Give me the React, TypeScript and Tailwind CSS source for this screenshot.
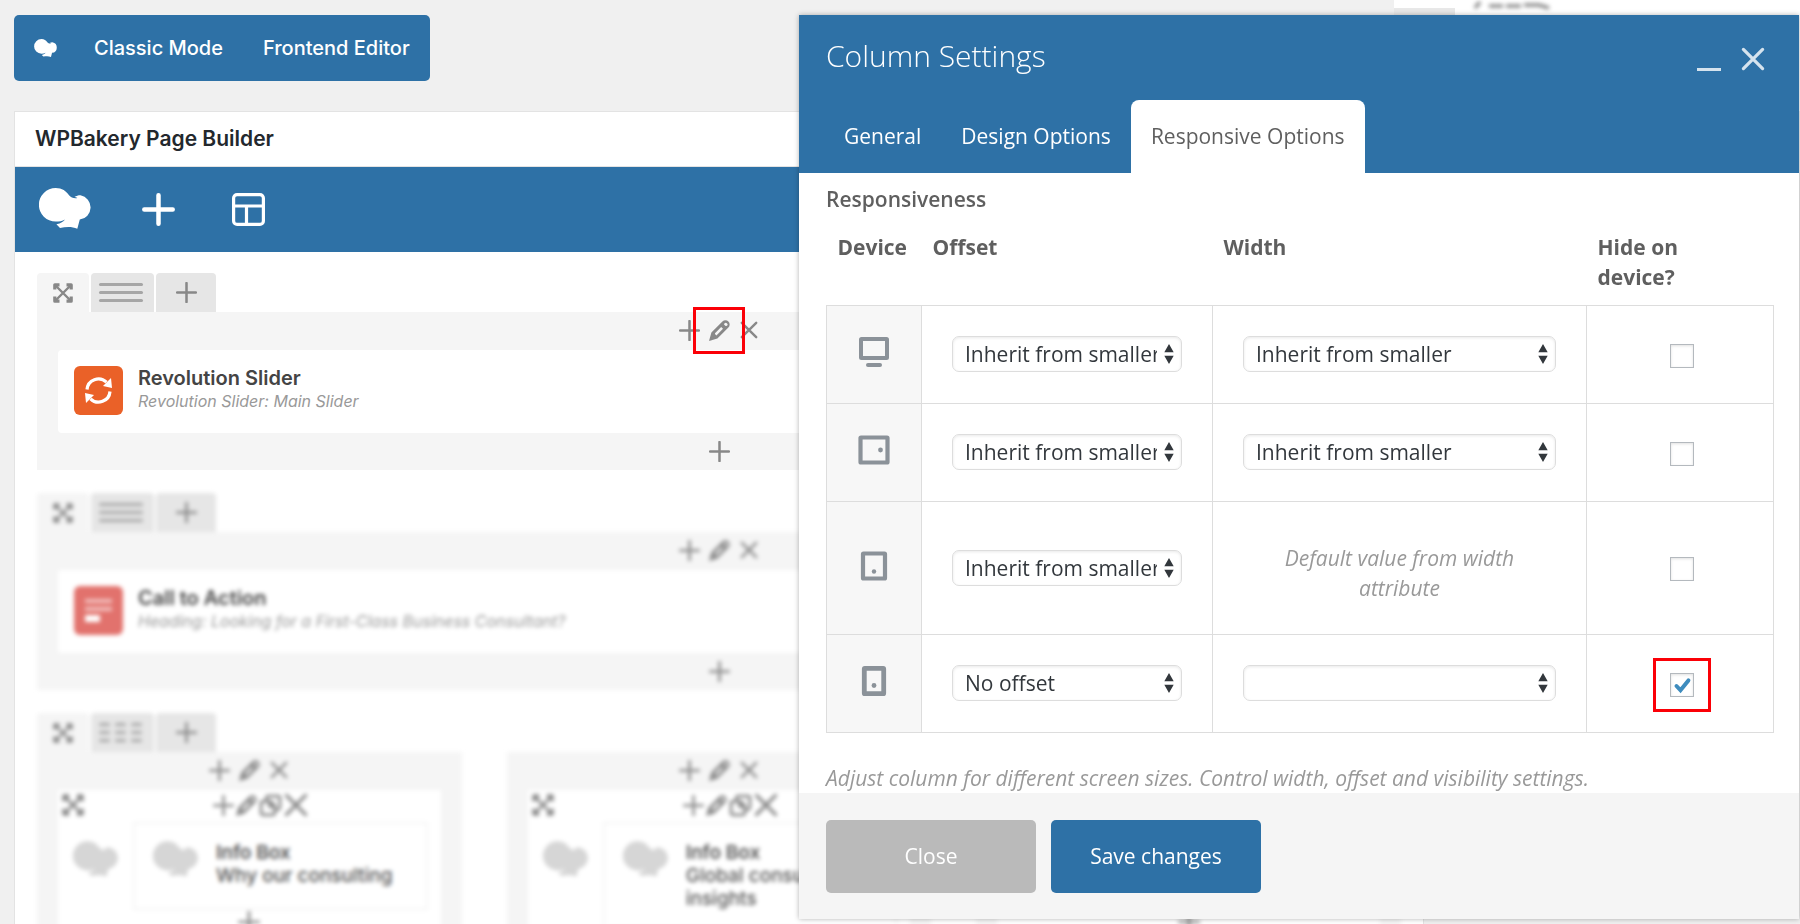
import { useState } from "react";
import clsx from "clsx";

const Logo = ({ className }: { className?: string }) => (
    <svg viewBox="0 0 54 41" fill="currentColor" className={className}>
        <path d="M16.7 0C23 0 27.4 3.2 30 7.2C32 9.6 35 10.6 38.4 10C37.4 9.2 36.4 9 35.4 9C37.4 7.8 39.2 7.3 41.5 7.3A12.3 12.3 0 0 1 40.8 31.6L38.3 40.8C33 38.4 27 38.8 21 40L17.4 36.2C22 35.2 24.5 33.6 26 31.4C23.4 33 20.2 33.6 16.7 33.6A16.8 16.8 0 0 1 16.7 0Z" />
    </svg>
);

const Plus = ({ className }: { className?: string }) => (
    <svg viewBox="0 0 20 20" fill="none" stroke="currentColor" strokeWidth="2.4" strokeLinecap="round" className={className}>
        <path d="M10 1V19M1 10H19" />
    </svg>
);

const Cross = ({ className }: { className?: string }) => (
    <svg viewBox="0 0 20 20" fill="none" stroke="currentColor" strokeWidth="2.7" strokeLinecap="round" className={className}>
        <path d="M2 2L18 18M18 2L2 18" />
    </svg>
);

const Pencil = ({ className }: { className?: string }) => (
    <svg viewBox="0 0 21 21" fill="currentColor" fillRule="evenodd" className={className}>
        <path d="M0 21L2.4 12.6L13.4 1.6A4.2 4.2 0 0 1 19.4 7.6L8.4 18.6ZM6 14L7.4 15.4L14 8.8L12.2 7L6 13.2ZM15 4.4L16.6 6A1.5 1.5 0 0 0 18 3.4A1.7 1.7 0 0 0 15 4.4Z" />
    </svg>
);

const Copy = ({ className }: { className?: string }) => (
    <svg viewBox="0 0 22 22" fill="none" stroke="currentColor" strokeWidth="2.6" strokeLinejoin="round" className={className}>
        <path d="M7 6V4A2 2 0 0 1 9 2H18A2 2 0 0 1 20 4V12A3 3 0 0 1 16 15M4 7H11L15 11V18A2 2 0 0 1 13 20H4A2 2 0 0 1 2 18V9A2 2 0 0 1 4 7ZM10 7V12H15" />
    </svg>
);

const Expand = ({ className }: { className?: string }) => (
    <svg viewBox="0 0 20 20" fill="none" stroke="currentColor" strokeWidth="3.2" strokeLinejoin="round" className={className}>
        <path strokeWidth="2.4" d="M3 3L17 17M17 3L3 17" />
        <path d="M1.8 6.5V1.8H6.5M13.5 1.8H18.2V6.5M18.2 13.5V18.2H13.5M6.5 18.2H1.8V13.5" />
    </svg>
);

const Layout = ({ className }: { className?: string }) => (
    <svg viewBox="0 0 33 33" fill="none" stroke="currentColor" strokeWidth="3.2" className={className}>
        <rect x="1.6" y="1.6" width="29.8" height="29.8" rx="3.5" />
        <path d="M2 13H31M14.5 13V31" />
    </svg>
);

const Refresh = ({ className }: { className?: string }) => (
    <svg viewBox="0 0 27 27" fill="currentColor" className={className}>
        <path d="M2 12.5A11.5 11.5 0 0 1 21.5 5.2M25 14.5A11.5 11.5 0 0 1 5.5 21.8" fill="none" stroke="currentColor" strokeWidth="3.2" />
        <path d="M18 9L26 1L27 11ZM9 18L1 26L0 16Z" />
    </svg>
);

const TextBlock = ({ className }: { className?: string }) => (
    <svg viewBox="0 0 27 25" fill="currentColor" className={className}>
        <path opacity="0.55" d="M0 1H27V5H0ZM0 9H27V13H0Z" />
        <rect y="17" width="15" height="7" rx="1" />
    </svg>
);

const deviceIcons = {
    desktop: (
        <svg viewBox="0 0 32 32" className="mx-auto size-8" fill="none" stroke="#8b9299" strokeWidth="4" strokeLinejoin="round">
            <rect x="3" y="3" width="26" height="19" rx="0.5" />
            <path d="M10 29H22" strokeLinecap="round" />
        </svg>
    ),
    tabletLandscape: (
        <svg viewBox="0 0 32 32" className="mx-auto size-8" fill="none" stroke="#8b9299" strokeWidth="4.2" strokeLinejoin="round">
            <rect x="2.5" y="3.5" width="27" height="25" rx="0.5" />
            <circle cx="22.5" cy="16" r="2.4" fill="#8b9299" stroke="none" />
        </svg>
    ),
    tablet: (
        <svg viewBox="0 0 32 32" className="mx-auto size-8" fill="none" stroke="#8b9299" strokeWidth="4.2" strokeLinejoin="round">
            <rect x="5" y="3.5" width="22" height="25" rx="0.5" />
            <circle cx="16" cy="21.5" r="2.2" fill="#8b9299" stroke="none" />
        </svg>
    ),
    phone: (
        <svg viewBox="0 0 32 32" className="mx-auto size-8" fill="none" stroke="#8b9299" strokeWidth="4.8" strokeLinejoin="round">
            <rect x="6.3" y="3.3" width="19.4" height="25.4" rx="0.5" />
            <circle cx="16" cy="20.5" r="2.4" fill="#8b9299" stroke="none" />
        </svg>
    ),
};

function ColumnControls({ highlight = false }: { highlight?: boolean }) {
    return (
        <div className="flex h-[38px] items-center justify-center pb-[2px] text-[#888]">
            <button aria-label="Add element" className="flex w-[30px] justify-center"><Plus className="size-[21px]" /></button>
            <button aria-label="Edit column" className="relative flex w-[30px] justify-center">
                <Pencil className="size-[21px]" />
                {highlight && <span className="absolute -inset-x-[11px] -inset-y-[13px] z-10 border-[3px] border-[#fb0007]" />}
            </button>
            <button aria-label="Delete column" className="flex w-[30px] justify-center"><Cross className="size-[18px]" /></button>
        </div>
    );
}

function RowTabs({ columns }: { columns: number }) {
    return (
        <div className="flex h-[39px] gap-[2px] text-[#888]">
            <button aria-label="Drag row" className="flex w-[52px] items-center justify-center rounded-t-sm bg-[#f5f5f5]">
                <Expand className="size-5" />
            </button>
            <button aria-label="Change layout" className="flex w-[63px] items-center gap-[5px] rounded-t-sm bg-[#e6e6e6] pl-2">
                {Array.from({ length: columns }, (_, i) => (
                    <span key={i} className={clsx("flex flex-col gap-[5px]", columns === 1 ? "w-11" : "w-[11px]")}>
                        <span className="h-[3px] rounded-full bg-[#a6a6a6]" />
                        <span className="h-[3px] rounded-full bg-[#a6a6a6]" />
                        <span className="h-[3px] rounded-full bg-[#a6a6a6]" />
                    </span>
                ))}
            </button>
            <button aria-label="Add column" className="flex w-[60px] items-center justify-center rounded-t-sm bg-[#e6e6e6]">
                <Plus className="size-[21px]" />
            </button>
        </div>
    );
}

type ElementRowProps = {
    title: string;
    text: string;
    icon: React.ReactNode;
    iconBg: string;
    highlight?: boolean;
    blurred?: boolean;
};

function ElementRow({ title, text, icon, iconBg, highlight, blurred }: ElementRowProps) {
    return (
        <section className={blurred ? "blur-[2px]" : ""}>
            <RowTabs columns={1} />
            <div className="bg-[#f5f5f5] px-[21px]">
                <ColumnControls highlight={highlight} />
                <div className="flex h-[83px] items-center gap-[15px] rounded-sm bg-white px-4 pb-[2px]">
                    <div className={clsx("flex size-[49px] items-center justify-center rounded-md text-white", iconBg)}>{icon}</div>
                    <div className="pb-[3px]">
                        <h3 className="text-[20px] leading-6 font-semibold text-[#444]">{title}</h3>
                        <p className="text-[16px] leading-[23px] text-[#999] italic">{text}</p>
                    </div>
                </div>
                <div className="flex h-[37px] items-center justify-center text-[#888]">
                    <button aria-label="Append element"><Plus className="size-[21px]" /></button>
                </div>
            </div>
        </section>
    );
}

function InfoColumn({ text }: { text?: string }) {
    return (
        <div className="flex-1 bg-[#f5f5f5] px-[21px] pb-9">
            <ColumnControls />
            <div className="bg-white pb-9">
                <div className="flex h-8 items-center pr-[7px] pb-[2px] text-[#888]">
                    <button aria-label="Move element" className="flex w-[30px] justify-center"><Expand className="size-[22px]" /></button>
                    <div className="flex flex-1 items-center justify-center gap-[2px]">
                        <Plus className="size-[21px]" />
                        <Pencil className="size-[21px]" />
                        <Copy className="size-[23px]" />
                        <Cross className="size-[24px]" />
                    </div>
                </div>
                <div className="flex gap-[13px] pr-[13px] pl-[15px]">
                    <Logo className="mt-[19px] h-9 w-[47px] shrink-0 text-[#d6d6d6]" />
                    <div className="flex min-h-[88px] flex-1 items-start gap-4 border-2 border-[#f5f5f5] px-[18px] py-[17px]">
                        <Logo className="h-9 w-[47px] shrink-0 text-[#d6d6d6]" />
                        {text && (
                            <div className="text-[19px] leading-[23px] text-[#555]">
                                <h4 className="font-semibold">Info Box</h4>
                                <p className="font-medium">{text}</p>
                            </div>
                        )}
                    </div>
                </div>
                <div className="flex h-6 items-center justify-center text-[#888]"><Plus className="size-[22px]" /></div>
            </div>
        </div>
    );
}

function Dropdown({ label, value, options }: { label: string; value: string; options: string[] }) {
    const [selected, setSelected] = useState(value);
    return (
        <div className="relative">
            <select
                aria-label={label}
                value={selected}
                onChange={(e) => setSelected(e.target.value)}
                className="block h-9 w-full appearance-none rounded-[7px] border border-[#ddd] bg-white pr-6 pl-3 text-[21px] text-[#32373c] shadow-[inset_0_1px_3px_rgba(0,0,0,0.09)]"
            >
                {options.map((option) => <option key={option}>{option}</option>)}
            </select>
            <svg viewBox="0 0 10 20" fill="#32373c" className="pointer-events-none absolute top-2 right-2 h-5 w-[10px]">
                <path d="M5 0L9.7 8.3H0.3ZM5 20L9.7 11.7H0.3Z" />
            </svg>
        </div>
    );
}

function HideCheckbox({ device, defaultChecked = false }: { device: string; defaultChecked?: boolean }) {
    const [checked, setChecked] = useState(defaultChecked);
    return (
        <label className="relative mx-auto block h-6 w-6">
            <input
                type="checkbox"
                aria-label={`Hide on ${device}`}
                checked={checked}
                onChange={() => setChecked(!checked)}
                className="block size-6 appearance-none border border-[#b4b9be] bg-white shadow-[inset_0_1px_3px_rgba(0,0,0,0.12)]"
            />
            {checked && (
                <svg viewBox="0 0 24 24" fill="none" stroke="#3e8cbe" strokeWidth="4" strokeLinecap="round" className="pointer-events-none absolute inset-0 size-6">
                    <path d="M6.5 13L10.5 17.3L18.4 7.4" />
                </svg>
            )}
            {defaultChecked && <span className="pointer-events-none absolute -inset-x-[17px] -inset-y-[15px] border-[3px] border-[#fb0007]" />}
        </label>
    );
}

const devices = [
    { name: "desktop", icon: deviceIcons.desktop, height: "h-[98px]", offset: "Inherit from smaller", width: "Inherit from smaller" },
    { name: "landscape tablet", icon: deviceIcons.tabletLandscape, height: "h-[98px]", offset: "Inherit from smaller", width: "Inherit from smaller" },
    { name: "portrait tablet", icon: deviceIcons.tablet, height: "h-[133px]", offset: "Inherit from smaller", width: null },
    { name: "phone", icon: deviceIcons.phone, height: "h-[98px]", offset: "No offset", width: "" },
];

function ColumnSettings() {
    const tabs = ["General", "Design Options", "Responsive Options"];
    const [activeTab, setActiveTab] = useState("Responsive Options");

    return (
        <div role="dialog" aria-label="Column Settings" className="absolute top-[15px] right-px w-5/9 bg-white font-['Open_Sans',sans-serif] text-[21px] leading-[30px] text-[#5f5f5f] shadow-[0_0_5px_rgba(0,0,0,0.3)]">
            <header className="bg-[#2e71a6] text-white">
                <div className="flex h-[85px] items-center justify-between pr-[34px] pl-[27px]">
                    <h2 className="pb-[3px] text-[30px] leading-10 font-light">Column Settings</h2>
                    <div className="flex gap-5 pt-[2px] text-[#d5e3ee]">
                        <button aria-label="Minimize" className="flex size-6 items-end"><span className="h-[3px] w-full bg-current" /></button>
                        <button aria-label="Close panel" className="flex size-6 items-center justify-center"><Cross className="size-6" /></button>
                    </div>
                </div>
                <nav className="flex h-[73px] pl-[25px]">
                    {tabs.map((tab) => (
                        <button
                            key={tab}
                            onClick={() => setActiveTab(tab)}
                            className={clsx("rounded-t-lg px-5 pb-[2px]", tab === activeTab ? "bg-white text-[#5f5f5f]" : "font-medium")}
                        >
                            {tab}
                        </button>
                    ))}
                </nav>
            </header>
            <div className="pt-[11px] pr-[25px] pl-[27px]">
                <h3 className="font-semibold">Responsiveness</h3>
                <table className="mt-[13px] w-full table-fixed border-collapse">
                    <colgroup>
                        <col className="w-[95px]" />
                        <col className="w-[291px]" />
                        <col />
                        <col className="w-[187px]" />
                    </colgroup>
                    <thead>
                        <tr className="h-[78px] text-left align-top font-bold">
                            <th className="pt-[5px] pl-[11px]">Device</th>
                            <th className="pt-[5px] pl-[11px]">Offset</th>
                            <th className="pt-[5px] pl-[11px]">Width</th>
                            <th className="pt-[5px] pr-16 pl-[11px]">Hide on device?</th>
                        </tr>
                    </thead>
                    <tbody>
                        {devices.map((device) => (
                            <tr key={device.name} className={device.height}>
                                <td className="border border-[#ddd] bg-[#f7f7f7] pb-1">{device.icon}</td>
                                <td className="border border-[#ddd] px-[30px]">
                                    <Dropdown label={`Offset on ${device.name}`} value={device.offset} options={["No offset", "Inherit from smaller"]} />
                                </td>
                                <td className="border border-[#ddd] px-[30px] text-center">
                                    {device.width === null ? (
                                        <p className="pt-[10px] text-[#999] italic">Default value from width attribute</p>
                                    ) : (
                                        <Dropdown label={`Width on ${device.name}`} value={device.width} options={["", "Inherit from smaller"]} />
                                    )}
                                </td>
                                <td className="border border-[#ddd] pt-[3px] pl-1">
                                    <HideCheckbox device={device.name} defaultChecked={device.name === "phone"} />
                                </td>
                            </tr>
                        ))}
                    </tbody>
                </table>
                <p className="mt-[30px] text-[#999] italic">Adjust column for different screen sizes. Control width, offset and visibility settings.</p>
            </div>
            <footer className="flex gap-[15px] bg-[#f5f5f5] px-[27px] pt-[27px] pb-[26px] text-white">
                <button className="h-[73px] w-[210px] rounded-[5px] bg-[#bababa]">Close</button>
                <button className="h-[73px] w-[210px] rounded-[5px] bg-[#2e71a6] font-medium">Save changes</button>
            </footer>
        </div>
    );
}

export default function App() {
    return (
        <div className="relative h-screen overflow-hidden bg-[#f0f0f0] font-[Inter,sans-serif]">
            <header className="flex justify-between pl-[14px]">
                <div className="mt-[15px] mb-[30px] flex h-[66px] items-center gap-10 rounded-[5px] bg-[#2e71a6] px-5 text-[20px] font-medium text-white">
                    <div className="flex items-center gap-9">
                        <Logo className="h-[18px] w-6" />
                        <button>Classic Mode</button>
                    </div>
                    <button>Frontend Editor</button>
                </div>
                <aside className="flex w-[406px] gap-[18px] bg-white">
                    <div className="mt-2 w-[61px] bg-[#e8e8e8]" />
                    <svg viewBox="0 0 80 10" className="h-[10px] w-20 text-[#777] blur-[2px]" fill="none" stroke="currentColor" strokeWidth="3">
                        <path d="M2 8L7 2M16 6H30M33 6H48M51 5H66L76 8" />
                    </svg>
                </aside>
            </header>
            <main className="mr-[376px] ml-[14px] border border-[#e3e3e3] bg-white">
                <h2 className="flex h-[55px] items-center border-b border-[#e3e3e3] px-5 text-[21px] font-semibold text-[#23282d]">WPBakery Page Builder</h2>
                <nav className="flex h-[85px] items-center bg-[#2e71a6] pl-6 text-white">
                    <Logo className="mb-[3px] h-[41px] w-[54px]" />
                    <button aria-label="Add element" className="ml-[49px]">
                        <svg viewBox="0 0 33 33" fill="none" stroke="currentColor" strokeWidth="4.5" strokeLinecap="round" className="size-[33px]">
                            <path d="M16.5 2.3V30.7M2.3 16.5H30.7" />
                        </svg>
                    </button>
                    <button aria-label="Templates" className="ml-[57px]"><Layout className="size-[33px]" /></button>
                </nav>
                <div className="flex flex-col gap-[23px] px-[22px] pt-[21px]">
                    <ElementRow
                        title="Revolution Slider"
                        text="Revolution Slider: Main Slider"
                        icon={<Refresh className="size-[27px]" />}
                        iconBg="bg-[#ea6128]"
                        highlight
                    />
                    <ElementRow
                        title="Call to Action"
                        text="Heading: Looking for a First-Class Business Consultant?"
                        icon={<TextBlock className="h-[25px] w-[27px]" />}
                        iconBg="bg-[#e2726d]"
                        blurred
                    />
                    <section className="blur-[2px]">
                        <RowTabs columns={3} />
                        <div className="flex gap-[45px]">
                            <InfoColumn text="Why our consulting" />
                            <InfoColumn text="Global consulting insights" />
                            <InfoColumn />
                        </div>
                    </section>
                </div>
            </main>
            <ColumnSettings />
        </div>
    );
}
